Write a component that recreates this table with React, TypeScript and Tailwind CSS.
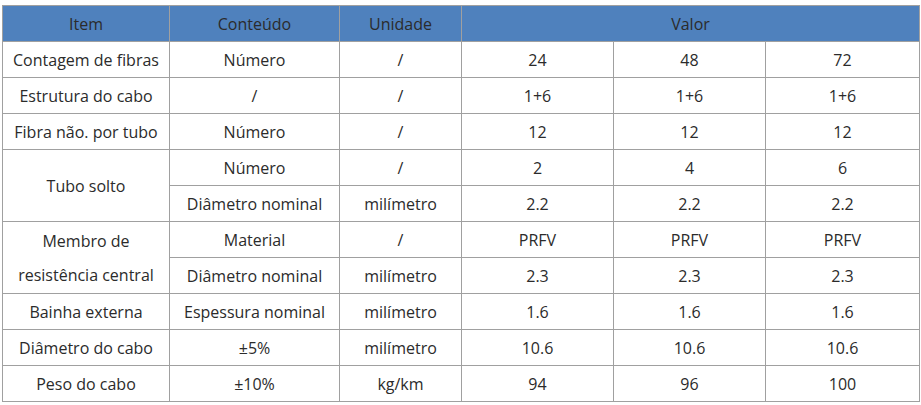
const rows: { item?: string; span?: number; content: string; unit: string; v: string[] }[] = [
  { item: "Contagem de fibras", content: "Número", unit: "/", v: ["24", "48", "72"] },
  { item: "Estrutura do cabo", content: "/", unit: "/", v: ["1+6", "1+6", "1+6"] },
  { item: "Fibra não. por tubo", content: "Número", unit: "/", v: ["12", "12", "12"] },
  { item: "Tubo solto", span: 2, content: "Número", unit: "/", v: ["2", "4", "6"] },
  { content: "Diâmetro nominal", unit: "milímetro", v: ["2.2", "2.2", "2.2"] },
  { item: "Membro de resistência central", span: 2, content: "Material", unit: "/", v: ["PRFV", "PRFV", "PRFV"] },
  { content: "Diâmetro nominal", unit: "milímetro", v: ["2.3", "2.3", "2.3"] },
  { item: "Bainha externa", content: "Espessura nominal", unit: "milímetro", v: ["1.6", "1.6", "1.6"] },
  { item: "Diâmetro do cabo", content: "±5%", unit: "milímetro", v: ["10.6", "10.6", "10.6"] },
  { item: "Peso do cabo", content: "±10%", unit: "kg/km", v: ["94", "96", "100"] },
];

const cell = "h-[36px] border border-[#a0a0a0] p-0 text-center align-middle leading-[20px]";

export default function App() {
  return (
    <div className="min-h-[405px] w-[921px] bg-white pl-[2px] pt-[5px] font-['Open_Sans',sans-serif] text-[16px] text-[#2b2b2b]">
      <table className="w-[917px] table-fixed border-collapse">
        <colgroup>
          <col className="w-[167px]" />
          <col className="w-[170px]" />
          <col className="w-[122px]" />
          <col className="w-[152px]" />
          <col className="w-[152px]" />
          <col className="w-[154px]" />
        </colgroup>
        <thead>
          <tr className="bg-[#4f81bd]">
            <th className={`${cell} font-normal`}>Item</th>
            <th className={`${cell} font-normal`}>Conteúdo</th>
            <th className={`${cell} font-normal`}>Unidade</th>
            <th className={`${cell} font-normal`} colSpan={3}>
              Valor
            </th>
          </tr>
        </thead>
        <tbody>
          {rows.map((r, i) => (
            <tr key={i}>
              {r.item && (
                <td className={`${cell} ${r.span ? "!leading-[34px]" : ""}`} rowSpan={r.span}>
                  {r.item}
                </td>
              )}
              <td className={cell}>{r.content}</td>
              <td className={cell}>{r.unit}</td>
              {r.v.map((x, j) => (
                <td key={j} className={cell}>
                  {x}
                </td>
              ))}
            </tr>
          ))}
        </tbody>
      </table>
    </div>
  );
}
